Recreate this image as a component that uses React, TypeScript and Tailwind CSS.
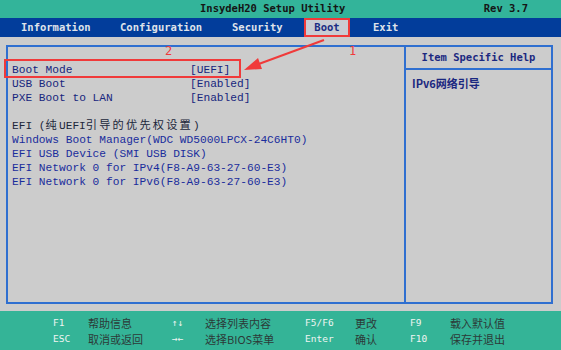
import React from 'react'

const mono = { fontFamily: '"Liberation Mono", "Noto Sans CJK SC", monospace' }
const dv = { fontFamily: '"DejaVu Sans Mono", "Noto Sans CJK SC", monospace' }
const cjk = { fontFamily: '"Noto Sans CJK SC", "Noto Sans", sans-serif' }

const settings = [
  { label: 'Boot Mode', value: '[UEFI]' },
  { label: 'USB Boot', value: '[Enabled]' },
  { label: 'PXE Boot to LAN', value: '[Enabled]' },
]

const bootList = [
  'Windows Boot Manager(WDC WD5000LPCX-24C6HT0)',
  'EFI USB Device (SMI USB DISK)',
  'EFI Network 0 for IPv4(F8-A9-63-27-60-E3)',
  'EFI Network 0 for IPv6(F8-A9-63-27-60-E3)',
]

const footer = [
  ['F1', '帮助信息', '↑↓', '选择列表内容', 'F5/F6', '更改', 'F9', '载入默认值'],
  ['ESC', '取消或返回', '→←', '选择BIOS菜单', 'Enter', '确认', 'F10', '保存并退出'],
]

export default function App() {
  return (
    <div className="relative w-[561px] h-[350px] flex flex-col overflow-hidden bg-[#cccccc]">
      {/* Title bar */}
      <div className="h-[18px] bg-[#33b49a] flex items-center pl-[200px] pr-[33px] text-[10.5px] font-bold text-[#151515]" style={dv}>
        <span>InsydeH20 Setup Utility</span>
        <span className="ml-auto">Rev 3.7</span>
      </div>

      {/* Menu bar */}
      <div className="h-[19px] bg-[#023d9b] flex items-center pl-[21px] text-[10.5px] font-bold text-[#dfe3ea]" style={dv}>
        <span className="w-[99px]">Information</span>
        <span className="w-[112px]">Configuration</span>
        <span className="w-[72px]">Security</span>
        <span className="w-[46px] h-[19px] flex items-center justify-center bg-[#c9ccd3] text-[#1b2c84]">Boot</span>
        <span className="ml-[23px]">Exit</span>
      </div>

      {/* Content */}
      <div className="flex-1 pt-[8px] pl-[6px] pr-[8px] pb-[7px]">
        <div className="h-full flex border-2 border-[#2f6fd0]">
          <div className="w-[398px] border-r-2 border-[#2f6fd0] pt-[16px] pl-[4px] text-[11.2px] text-[#17267e]" style={mono}>
            {settings.map((s) => (
              <div key={s.label} className="h-[14px] leading-[14px] flex whitespace-pre">
                <span className="w-[178px]">{s.label}</span>
                <span>{s.value}</span>
              </div>
            ))}
            <div className="h-[14px]" />
            <div className="h-[14px] leading-[14px] text-[#20263a] whitespace-pre">
              EFI (<span className="tracking-[2.2px]">纯</span>UEFI<span className="tracking-[2.2px]">引导的优先权设置</span>)
            </div>
            {bootList.map((b) => (
              <div key={b} className="h-[14px] leading-[14px] whitespace-pre text-[#1a2c9c]">
                {b}
              </div>
            ))}
          </div>
          <div className="flex-1 flex flex-col">
            <div className="h-[23px] border-b-2 border-[#2f6fd0] flex items-center justify-center text-[10.5px] font-bold text-[#1b2880]" style={dv}>
              Item Specific Help
            </div>
            <div className="pt-[6px] pl-[6px] h-[14px] leading-[14px] box-content text-[11px] font-bold text-[#1b2880]" style={cjk}>
              IPv6网络引导
            </div>
          </div>
        </div>
      </div>

      {/* Footer */}
      <div className="h-[39px] bg-[#34b497] pt-[4px] pl-[53px]">
        {footer.map((row, i) => (
          <div key={i} className="h-[16px] flex items-center">
            <span className="w-[35px] text-[9.5px] text-[#f0f4f2]" style={dv}>{row[0]}</span>
            <span className="w-[84px] text-[11px] text-[#2c3a37]" style={cjk}>{row[1]}</span>
            <span className="w-[33px] text-[9.5px] text-[#f0f4f2]" style={dv}>{row[2]}</span>
            <span className="w-[100px] text-[11px] text-[#2c3a37]" style={cjk}>{row[3]}</span>
            <span className="w-[50px] text-[9.5px] text-[#f0f4f2]" style={dv}>{row[4]}</span>
            <span className="w-[55px] text-[11px] text-[#2c3a37]" style={cjk}>{row[5]}</span>
            <span className="w-[40px] text-[9.5px] text-[#f0f4f2]" style={dv}>{row[6]}</span>
            <span className="text-[11px] text-[#2c3a37]" style={cjk}>{row[7]}</span>
          </div>
        ))}
      </div>

      {/* Annotations */}
      <div className="absolute left-[304px] top-[18px] w-[46px] h-[19px] border-2 border-[#f03a3a]" />
      <div className="absolute left-[4px] top-[59px] w-[237px] h-[19px] border-2 border-[#f03a3a]" />
      <span className="absolute left-[165px] top-[44px] text-[12px] leading-[14px] text-[#f03a3a]" style={dv}>2</span>
      <span className="absolute left-[349px] top-[44px] text-[12px] leading-[14px] text-[#f03a3a]" style={dv}>1</span>
      <svg className="absolute left-0 top-0" width="561" height="350" viewBox="0 0 561 350">
        <line x1="324" y1="40" x2="256" y2="65" stroke="#f03a3a" strokeWidth="2" />
        <polygon points="244,70 258,58 262,69" fill="#f03a3a" />
      </svg>
    </div>
  )
}
